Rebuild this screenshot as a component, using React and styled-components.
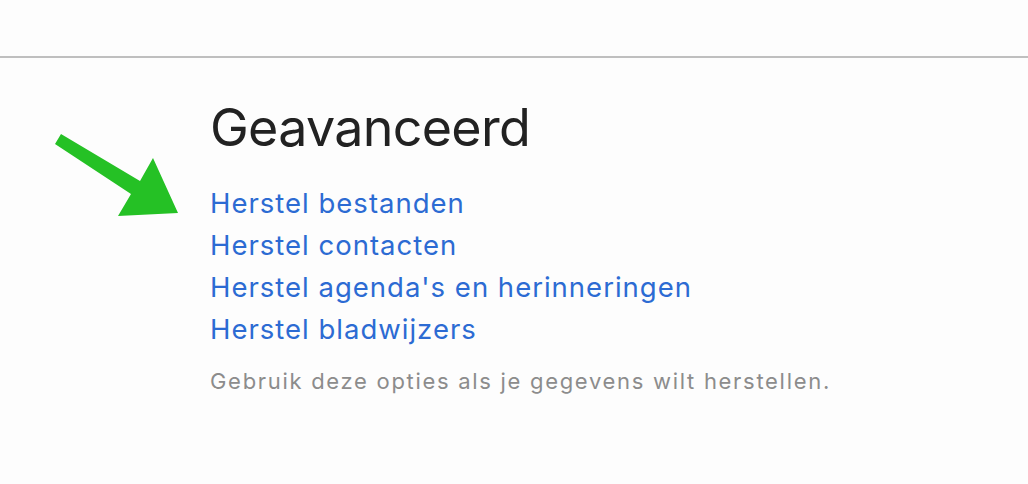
import React from "react";
import styled, { createGlobalStyle } from "styled-components";

const Global = createGlobalStyle`
  html, body { margin: 0; padding: 0; background: #fdfdfd; }
  body { font-family: Inter, "Open Sans", sans-serif; }
`;

const Page = styled.div`
  width: 1028px;
  height: 484px;
  overflow: hidden;
  background: #fdfdfd;
  display: flex;
  flex-direction: column;
`;

const TopBar = styled.div`
  box-sizing: border-box;
  height: 58px;
  border-bottom: 2px solid #bfbfbf;
`;

const Body = styled.div`
  position: relative;
  display: flex;
  padding: 42px 0 0 210px;
`;

const Section = styled.section`
  display: flex;
  flex-direction: column;
`;

const Title = styled.h1`
  margin: 0 0 26px 0;
  font-size: 52px;
  font-weight: 400;
  line-height: 56px;
  color: #222;
  letter-spacing: -0.7px;
`;

const LinkList = styled.div`
  display: flex;
  flex-direction: column;
`;

const Link = styled.a`
  font-size: 27.5px;
  line-height: 42px;
  color: #2c6bd3;
  letter-spacing: 1px;
  text-decoration: none;
  cursor: pointer;
`;

const Note = styled.p`
  margin: 16px 0 0 0;
  font-size: 22px;
  line-height: 30px;
  color: #8c8c8c;
  letter-spacing: 1.7px;
`;

const Arrow = styled.svg`
  position: absolute;
  left: 0;
  top: 0;
  overflow: visible;
`;

export default function App() {
  return (
    <Page>
      <Global />
      <TopBar />
      <Body>
        <Arrow width="200" height="200" viewBox="0 0 200 200">
          <g transform="translate(0,-58)">
            <polygon
              points="55,144 61,134 140,181 153,158 178,213 118,216 131,194"
              fill="#25c125"
            />
          </g>
        </Arrow>
        <Section>
          <Title>Geavanceerd</Title>
          <LinkList>
            <Link>Herstel bestanden</Link>
            <Link>Herstel contacten</Link>
            <Link>Herstel agenda's en herinneringen</Link>
            <Link>Herstel bladwijzers</Link>
          </LinkList>
          <Note>Gebruik deze opties als je gegevens wilt herstellen.</Note>
        </Section>
      </Body>
    </Page>
  );
}
